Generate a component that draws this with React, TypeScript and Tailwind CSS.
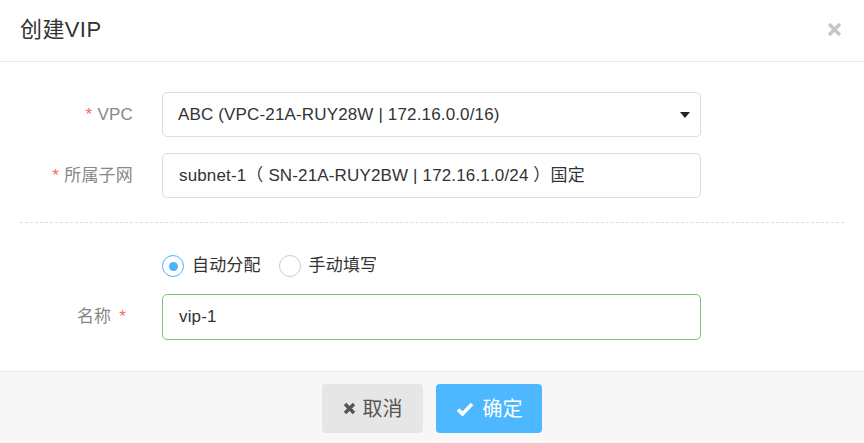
import React from 'react';

const font = "font-['Liberation_Sans','Noto_Sans_CJK_SC',sans-serif]";

const Label = ({ text }: { text: string }) => (
  <div className="w-[133px] shrink-0 text-right text-[17px] tracking-[0.2px] text-[#888]">
    <span className="text-[#f56c6c] mr-[5px]">*</span>
    {text}
  </div>
);

const App = () => {
  return (
    <div className={`w-[864px] h-[443px] bg-white flex flex-col ${font}`}>
      {/* Header */}
      <div className="h-[62px] shrink-0 flex items-center justify-between pl-5 pr-[22px] border-b border-[#e8e8e8]">
        <h2 className="text-[22px] tracking-[0.4px] text-[#333] pb-[2px]">创建VIP</h2>
        <svg width="15" height="15" viewBox="0 0 15 15" className="mb-[3px]">
          <path d="M2 2 L13 13 M13 2 L2 13" stroke="#c6c6c6" strokeWidth="3.4" strokeLinecap="butt" />
        </svg>
      </div>

      {/* Body */}
      <div className="pt-[30px] pb-[31px] text-[17px] tracking-[0.15px]">
        <div className="flex items-center">
          <Label text="VPC" />
          <div className="ml-[29px] w-[539px] h-[45px] border border-[#ddd] rounded-[5px] flex items-center justify-between pl-[15px] pr-[10px] text-[#333]">
            <span>ABC (VPC-21A-RUY28W | 172.16.0.0/16)</span>
            <svg width="10" height="6" viewBox="0 0 10 6">
              <path d="M0 0 H10 L5 6 Z" fill="#222" />
            </svg>
          </div>
        </div>
        <div className="flex items-center mt-4">
          <Label text="所属子网" />
          <div className="ml-[29px] w-[539px] h-[45px] border border-[#ddd] rounded-[5px] flex items-center pl-[16px] text-[#333]">
            subnet-1（ SN-21A-RUY2BW | 172.16.1.0/24 ）国定
          </div>
        </div>

        <div className="mx-5 mt-6 border-t border-dashed border-[#ddd]" />

        <div className="flex items-center h-[22px] mt-[32px] ml-[162px] text-[#333]">
          <label className="flex items-center">
            <span className="w-[22px] h-[22px] rounded-full border border-[#4db3ff] flex items-center justify-center">
              <span className="w-[9px] h-[9px] rounded-full bg-[#4db3ff]" />
            </span>
            <span className="ml-[8px]">自动分配</span>
          </label>
          <label className="flex items-center ml-[18px]">
            <span className="w-[22px] h-[22px] rounded-full border border-[#ccc]" />
            <span className="ml-[8px]">手动填写</span>
          </label>
        </div>

        <div className="flex items-center mt-[17px]">
          <div className="w-[133px] shrink-0 text-right text-[#888] pr-[7px]">
            名称<span className="text-[#f56c6c] ml-2">*</span>
          </div>
          <div className="ml-[29px] w-[539px] h-[46px] border border-[#78c578] rounded-[5px] flex items-center pl-[16px] text-[#333]">
            vip-1
          </div>
        </div>
      </div>

      {/* Footer */}
      <div className="flex-1 bg-[#f7f7f7] border-t border-[#e8e8e8] flex justify-center items-start pt-[12px] gap-[13px]">
        <button className="w-[101px] h-[49px] rounded-[4px] bg-[#e6e6e6] text-[#555] text-[20px] flex items-center justify-center gap-[7px]">
          <svg width="13" height="13" viewBox="0 0 13 13">
            <path d="M2 2 L11 11 M11 2 L2 11" stroke="#555" strokeWidth="3.4" />
          </svg>
          取消
        </button>
        <button className="w-[106px] h-[49px] rounded-[4px] bg-[#4db8ff] text-white text-[20px] flex items-center justify-center gap-[9px]">
          <svg width="18" height="14" viewBox="0 0 18 14">
            <path d="M2 7.5 L6.5 12 L16 2" stroke="#fff" strokeWidth="3.6" fill="none" />
          </svg>
          确定
        </button>
      </div>
    </div>
  );
};

export default App;
